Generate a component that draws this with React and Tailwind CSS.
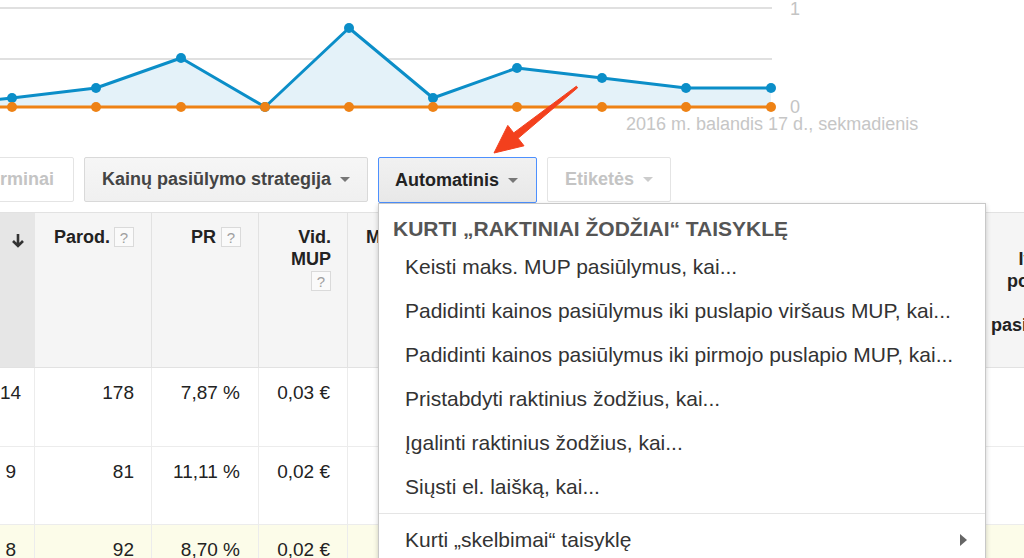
import React from 'react'

const blue = [
  [-73, 107],
  [12, 98],
  [96, 88],
  [181, 58],
  [265, 107],
  [349, 28],
  [433, 98],
  [517, 68],
  [602, 78],
  [686, 88],
  [771, 88],
]

function Chart() {
  const line = blue.map(([x, y]) => `${x},${y}`).join(' ')
  const area = `${line} 771,107 -73,107`
  return (
    <svg width="1024" height="114" viewBox="0 0 1024 114" className="block">
      <line x1="0" y1="8" x2="772" y2="8" stroke="#d6d6d6" strokeWidth="1.5" />
      <line x1="0" y1="59" x2="772" y2="59" stroke="#d6d6d6" strokeWidth="1.5" />
      <polygon points={area} fill="#e4f2f9" />
      <polyline points={line} fill="none" stroke="#0b8ec8" strokeWidth="3" strokeLinejoin="round" />
      <line x1="0" y1="107" x2="771" y2="107" stroke="#ee8215" strokeWidth="3" />
      {blue.slice(1).map(([x, y]) => (
        <circle key={'b' + x} cx={x} cy={y} r="5" fill="#0b8ec8" />
      ))}
      {blue.slice(1).map(([x]) => (
        <circle key={'o' + x} cx={x} cy="107" r="5" fill="#ee8215" />
      ))}
      <text x="790" y="15" fontSize="18" fill="#c4c4c4" fontFamily="Liberation Sans, Arial, sans-serif">1</text>
      <text x="790" y="113" fontSize="18" fill="#c4c4c4" fontFamily="Liberation Sans, Arial, sans-serif">0</text>
    </svg>
  )
}

function Caret({ light }) {
  return (
    <span
      className={`inline-block h-0 w-0 border-x-[5px] border-t-[5px] border-x-transparent ${light ? 'border-t-[#cccccc]' : 'border-t-[#777777]'}`}
    />
  )
}

function Help() {
  return (
    <span className="flex h-[20px] w-[20px] shrink-0 items-center justify-center border border-[#dadada] bg-[#fafafa] text-[15px] font-normal leading-none text-[#a0a0a0]">
      ?
    </span>
  )
}

function Row({ values, yellow, first }) {
  return (
    <div className={`flex border-b border-[#ececec] ${first ? 'h-[79px]' : 'h-[78px]'} ${yellow ? 'bg-[#fcfce9]' : 'bg-white'}`}>
      <div className="w-[35px] shrink-0 border-r border-[#ececec] pr-[18px] pt-[14px] text-right">{values[0]}</div>
      <div className="w-[117px] shrink-0 border-r border-[#ececec] pr-[17px] pt-[14px] text-right">{values[1]}</div>
      <div className="w-[107px] shrink-0 border-r border-[#ececec] pr-[18px] pt-[14px] text-right">{values[2]}</div>
      <div className="w-[89px] shrink-0 border-r border-[#ececec] pr-[17px] pt-[14px] text-right">{values[3]}</div>
      <div className="w-[212px] shrink-0 border-r border-[#ececec]" />
      <div className="w-[200px] shrink-0 border-r border-[#ececec]" />
      <div className="w-[200px] shrink-0" />
      <div className="w-[160px] shrink-0" />
    </div>
  )
}

const menuItems = [
  'Keisti maks. MUP pasiūlymus, kai...',
  'Padidinti kainos pasiūlymus iki puslapio viršaus MUP, kai...',
  'Padidinti kainos pasiūlymus iki pirmojo puslapio MUP, kai...',
  'Pristabdyti raktinius žodžius, kai...',
  'Įgalinti raktinius žodžius, kai...',
  'Siųsti el. laišką, kai...',
]

export default function App() {
  return (
    <div className="relative h-[558px] w-[1024px] overflow-hidden bg-white font-['Liberation_Sans',Arial,sans-serif] text-[#222]">
      <Chart />
      <div className="h-[20px] pl-[626px] text-[18px] leading-[20px] text-[#c6c6c6] whitespace-nowrap">
        2016 m. balandis 17 d., sekmadienis
      </div>

      <div className="mt-[23px] flex h-[46px] items-start gap-[10px] whitespace-nowrap text-[18px] font-bold">
        <div className="ml-[-40px] flex h-[45px] w-[114px] shrink-0 items-center justify-end rounded-[2px] border border-[#e4e4e4] bg-white pr-[19px] text-[#c4c4c4]">
          Terminai
        </div>
        <div className="flex h-[45px] shrink-0 items-center gap-[9px] rounded-[2px] border border-[#d9d9d9] bg-gradient-to-b from-[#f6f6f6] to-[#f0f0f0] pl-[17px] pr-[17px] text-[#444]">
          Kainų pasiūlymo strategija <Caret />
        </div>
        <div className="flex h-[46px] shrink-0 items-center gap-[9px] rounded-[2px] border border-[#4d90fe] bg-gradient-to-b from-[#f1f1f1] to-[#e8e8e8] pl-[16px] pr-[18px] text-[#222]">
          Automatinis <Caret />
        </div>
        <div className="flex h-[45px] shrink-0 items-center gap-[9px] rounded-[2px] border border-[#e4e4e4] bg-white pl-[17px] pr-[17px] text-[#c4c4c4]">
          Etiketės <Caret light />
        </div>
      </div>

      <div className="mt-[9px] border-t border-[#e2e2e2]">
        <div className="flex h-[155px] border-b border-[#e2e2e2] bg-[#f5f5f5] text-[18px] font-bold leading-[22px] text-[#222]">
          <div className="w-[35px] shrink-0 bg-[#e6e6e6] pt-[16px] text-center text-[#333]">
            <svg width="14" height="16" viewBox="0 0 14 16" className="inline-block">
              <path d="M7 1v11M2 8l5 5 5-5" fill="none" stroke="#333" strokeWidth="2.6" />
            </svg>
          </div>
          <div className="flex w-[117px] shrink-0 items-start justify-end gap-[4px] border-r border-[#e2e2e2] pr-[17px] pt-[13px]">
            <span>Parod.</span>
            <span className="pt-[1px]"><Help /></span>
          </div>
          <div className="flex w-[107px] shrink-0 items-start justify-end gap-[5px] border-r border-[#e2e2e2] pr-[17px] pt-[13px]">
            <span>PR</span>
            <span className="pt-[1px]"><Help /></span>
          </div>
          <div className="flex w-[89px] shrink-0 flex-col items-end border-r border-[#e2e2e2] pr-[16px] pt-[13px]">
            <span>Vid.</span>
            <span>MUP</span>
            <span className="mt-[1px]"><Help /></span>
          </div>
          <div className="w-[212px] shrink-0 border-r border-[#e2e2e2] pl-[18px] pt-[13px] whitespace-nowrap">Maks. MUP</div>
          <div className="w-[200px] shrink-0 border-r border-[#e2e2e2]" />
          <div className="w-[200px] shrink-0" />
          <div className="w-[160px] shrink-0 pt-[35px] text-center whitespace-nowrap">
            Ivert.<br />pozicija<br /><br />pasiūlymas
          </div>
        </div>
        <div className="text-[19px] leading-[22px]">
          <Row first values={['14', '178', '7,87 %', '0,03 €']} />
          <Row values={['9', '81', '11,11 %', '0,02 €']} />
          <Row yellow values={['8', '92', '8,70 %', '0,02 €']} />
        </div>
      </div>

      <div className="absolute left-[378px] top-[203px] h-[370px] w-[608px] border border-[#c8c8c8] bg-white shadow-[0_2px_5px_rgba(0,0,0,0.2)] whitespace-nowrap">
        <div className="pl-[14px] pt-[12px] text-[21px] font-bold leading-[26px] text-[#555]">
          KURTI „RAKTINIAI ŽODŽIAI“ TAISYKLĘ
        </div>
        <div className="mt-[3px]">
          {menuItems.map((item) => (
            <div key={item} className="h-[44px] pl-[26px] text-[21px] leading-[44px] text-[#333]">
              {item}
            </div>
          ))}
        </div>
        <div className="mt-[4px] border-t border-[#e5e5e5]" />
        <div className="flex h-[52px] items-center justify-between pl-[26px] pr-[18px] text-[21px] text-[#333]">
          <span>Kurti „skelbimai“ taisyklę</span>
          <span className="inline-block h-0 w-0 border-y-[6px] border-l-[7px] border-y-transparent border-l-[#666]" />
        </div>
      </div>

      <svg className="absolute left-0 top-0" width="1024" height="200" viewBox="0 0 1024 200">
        <polygon
          points="576.4,86.2 513.7,132.9 507.8,125.4 494,153 524,145.8 518.1,138.3 577.6,87.8"
          fill="#f3401d"
          stroke="#f3401d"
          strokeWidth="1"
          strokeLinejoin="round"
        />
      </svg>
    </div>
  )
}
